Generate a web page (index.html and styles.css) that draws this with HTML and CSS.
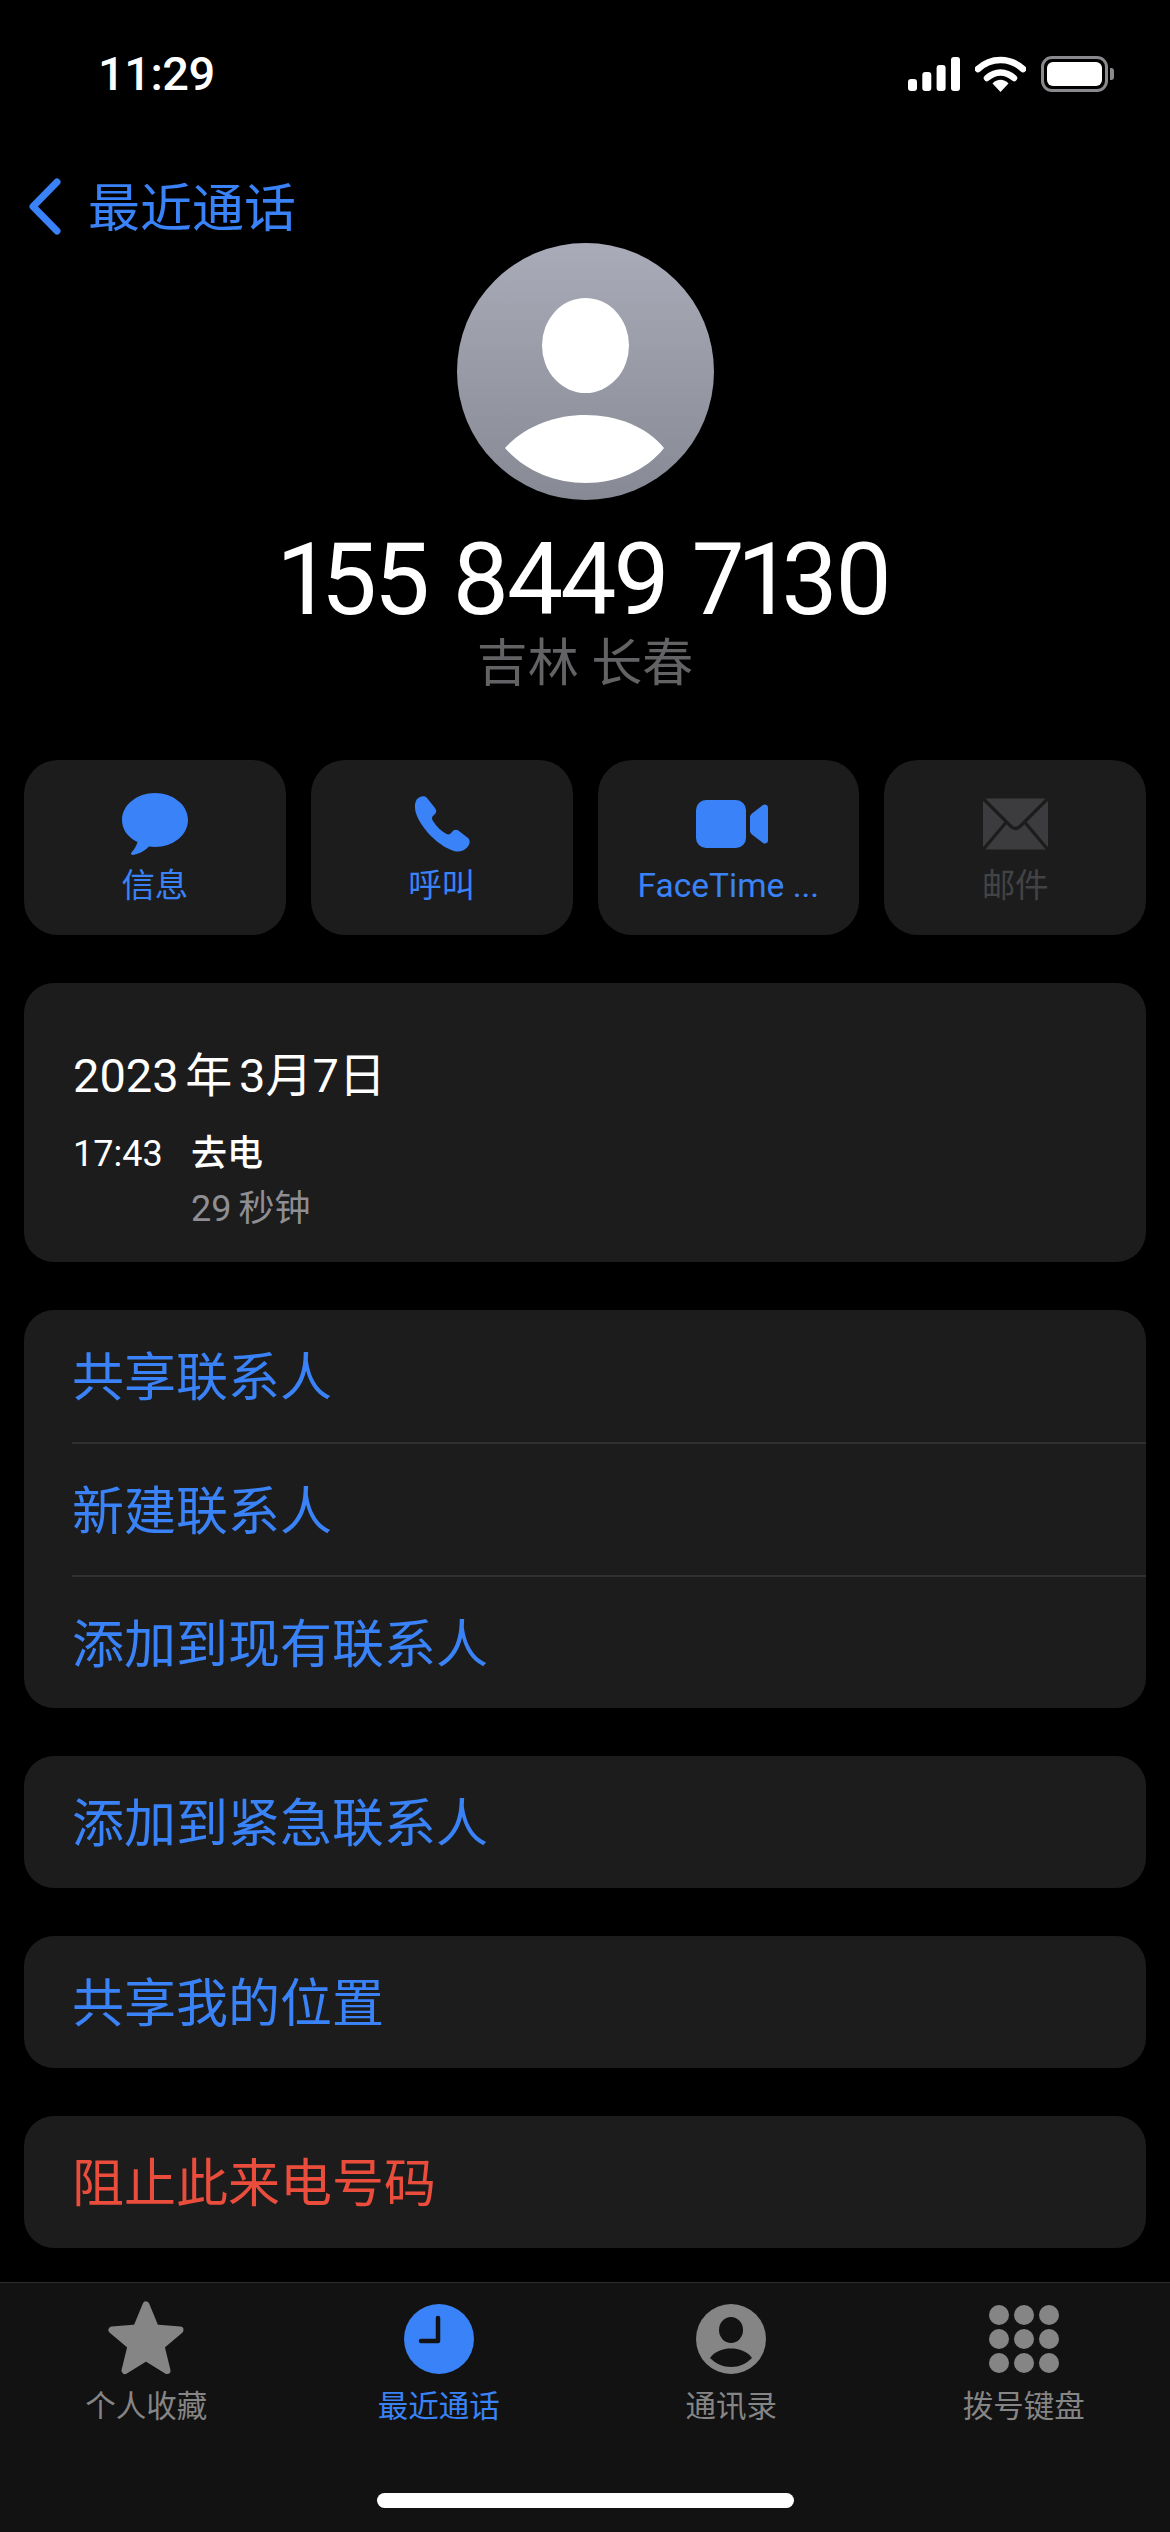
FILE: index.html
```html
<!DOCTYPE html>
<html lang="zh-CN">
<head>
  <meta charset="UTF-8" />
  <meta name="viewport" content="width=device-width, initial-scale=1.0"/>
  <title>最近通话</title>
  <link rel="stylesheet" href="styles.css">
</head>
<body>
  <div class="status">
    <span class="clock">11:29</span>
    <div class="status-icons">
      <svg class="ic-signal" width="52" height="34" viewBox="0 0 52 34"><rect x="0" y="22" width="9" height="12" rx="3"/><rect x="14.3" y="15" width="9" height="19" rx="3"/><rect x="28.6" y="8" width="9" height="26" rx="3"/><rect x="43" y="0" width="9" height="34" rx="3"/></svg>
      <svg class="ic-wifi" width="51" height="36" viewBox="0 0 51 36"><path d="M3 13 C16 1 35 1 48 13" fill="none" stroke="#fff" stroke-width="6.5" stroke-linecap="round"/><path d="M12 22 C20 14.500 31 14.500 39 22" fill="none" stroke="#fff" stroke-width="6.5" stroke-linecap="round"/><path d="M17.500 27.500 C22 22.500 29 22.500 33.500 27.500 L25.500 36 Z" fill="#fff"/></svg>
      <div class="battery"><div class="battery-fill"></div></div>
    </div>
  </div>

  <a class="back">
    <svg width="33" height="57" viewBox="0 0 33 57"><path d="M29 4 L5 28.500 L29 53" fill="none" stroke="#3a82f7" stroke-width="7" stroke-linecap="round" stroke-linejoin="round"/></svg>
    <span>最近通话</span>
  </a>

  <div class="avatar">
    <svg width="257" height="257" viewBox="0 0 257 257">
      <defs><linearGradient id="avatarBg" x1="0" y1="0" x2="0" y2="1"><stop offset="0" stop-color="#a9acb8"/><stop offset="1" stop-color="#878a94"/></linearGradient></defs>
      <circle cx="128.500" cy="128.500" r="128.500" fill="url(#avatarBg)"/>
      <ellipse cx="128.500" cy="102.500" rx="43.500" ry="47.500" fill="#fff"/>
      <path d="M48 205 C68 183 98 172 128.500 172 C159 172 189 183 207 205 C189 228 159 240 128.500 240 C98 240 68 228 48 205 Z" fill="#fff"/>
    </svg>
  </div>
  <div class="number">155 8449 7130</div>
  <div class="place">吉林 长春</div>

  <div class="content">
    <div class="actions">
      <div class="action">
        <svg width="66" height="62" viewBox="0 0 66 62"><path d="M33 0 C51 0 66 12 66 27 C66 42 51 54 33 54 C31 54 29 53.800 27 53.500 C23 57.500 17 61 11 62 C9 62 8.500 60.500 9.500 59.500 C12 57 14.500 53 15.500 49 C6 44.500 0 36.500 0 27 C0 12 15 0 33 0 Z" fill="#3a82f7"/></svg>
        <span>信息</span>
      </div>
      <div class="action">
        <svg width="56" height="56" viewBox="0 0 56 56"><path d="M3 3 C6 0 11 -1 13 2 L21 12 C23 15 22.500 17 20 19 C17.500 21 17.500 22.500 19 25 C23 31 27 35 32.500 38 C34.500 39 36 38.500 38 36 C40 33.500 42.500 33 45 35 L54 42 C56.500 44 56 48.500 53.500 51 C50 55 45 56.500 40 55 C26 50.500 10 36 3 20 C0.500 14 0 7.500 3 3 Z" fill="#3a82f7"/></svg>
        <span>呼叫</span>
      </div>
      <div class="action">
        <svg class="ic-video" width="72" height="48" viewBox="0 0 72 48"><rect x="0" y="0" width="50" height="48" rx="10" fill="#3a82f7"/><path d="M54 17 C54 15.500 55 14.500 56 13.500 L67 5 C69 3.500 72 5 72 7.500 L72 40.500 C72 43 69 44.500 67 43 L56 34.500 C55 33.500 54 32.500 54 31 Z" fill="#3a82f7"/></svg>
        <span>FaceTime ...</span>
      </div>
      <div class="action off">
        <svg width="65" height="51" viewBox="0 0 65 51"><rect width="65" height="51" rx="4" fill="#3c3c3e"/><path d="M1 1 L28 28 Q32.500 32 37 28 L64 1 M1 50 L23 24 M64 50 L42 24" fill="none" stroke="#1c1c1d" stroke-width="3.200"/></svg>
        <span>邮件</span>
      </div>
    </div>

    <div class="card log">
      <div class="log-date">2023 年 3月7日</div>
      <div class="log-row">
        <div class="log-time">17:43</div>
        <div>
          <div class="log-type">去电</div>
          <div class="log-len">29 秒钟</div>
        </div>
      </div>
    </div>

    <div class="card">
      <div class="row">共享联系人</div>
      <div class="row">新建联系人</div>
      <div class="row">添加到现有联系人</div>
    </div>
    <div class="card"><div class="row">添加到紧急联系人</div></div>
    <div class="card"><div class="row">共享我的位置</div></div>
    <div class="card"><div class="row red">阻止此来电号码</div></div>
  </div>

  <div class="tabbar">
    <div class="tabs">
      <div class="tab">
        <svg width="76" height="72" viewBox="0 3 76 72"><path d="M38 4 L47.500 27 L72 29 L53 45 L59 69.500 L38 56.500 L17 69.500 L23 45 L4 29 L28.500 27 Z" fill="#858585" stroke="#858585" stroke-width="7" stroke-linejoin="round"/></svg>
        <span>个人收藏</span>
      </div>
      <div class="tab active">
        <svg width="70" height="72" viewBox="0 0 70 72"><circle cx="35" cy="35" r="35" fill="#3a82f7"/><path d="M34 14 L34 37 L17 37" fill="none" stroke="#121212" stroke-width="4.500" stroke-linecap="round" stroke-linejoin="round"/></svg>
        <span>最近通话</span>
      </div>
      <div class="tab">
        <svg width="70" height="72" viewBox="0 0 70 72"><circle cx="35" cy="35" r="35" fill="#858585"/><ellipse cx="35" cy="26" rx="12" ry="13" fill="#121212"/><path d="M14 54 C19 47 27 44.500 35 44.500 C43 44.500 51 47 56 54 C50 60 43 63 35 63 C27 63 20 60 14 54 Z" fill="#121212"/></svg>
        <span>通讯录</span>
      </div>
      <div class="tab">
        <svg width="70" height="72" viewBox="0 0 70 72" fill="#858585"><circle cx="10" cy="11" r="10"/><circle cx="35" cy="11" r="10"/><circle cx="60" cy="11" r="10"/><circle cx="10" cy="35" r="10"/><circle cx="35" cy="35" r="10"/><circle cx="60" cy="35" r="10"/><circle cx="10" cy="59" r="10"/><circle cx="35" cy="59" r="10"/><circle cx="60" cy="59" r="10"/></svg>
        <span>拨号键盘</span>
      </div>
    </div>
    <div class="home"></div>
  </div>
</body>
</html>
```

FILE: styles.css
```css
* { box-sizing: border-box; }
body { margin: 0; width: 1170px; height: 2532px; overflow: hidden; background: #000; color: #fff; font-family: Roboto, "Noto Sans CJK SC", sans-serif; display: flex; flex-direction: column; }

.status { height: 148px; padding: 50px 62px 0 98px; display: flex; justify-content: space-between; align-items: flex-start; }
.clock { font-size: 47px; line-height: 48px; font-weight: 500; letter-spacing: -0.5px; }
.status-icons { display: flex; align-items: center; gap: 15px; margin-top: 6px; }
.ic-signal { fill: #fff; }
.battery { width: 67px; height: 36px; border: 3px solid #8a8a8e; border-radius: 11px; padding: 3px; position: relative; }
.battery::after { content: ""; position: absolute; right: -9px; top: 9px; width: 4px; height: 12px; background: #8a8a8e; border-radius: 0 3px 3px 0; }
.battery-fill { width: 100%; height: 100%; background: #fff; border-radius: 6px; }

.back { height: 95px; padding: 30px 0 0 28px; display: flex; align-items: flex-start; gap: 27px; color: #3a82f7; font-size: 52px; line-height: 63px; }
.avatar { height: 257px; display: flex; justify-content: center; }
.number { margin-top: 27px; height: 100px; line-height: 106px; font-size: 100px; text-align: center; font-variant-numeric: proportional-nums; letter-spacing: -3px; word-spacing: 3px; }
.place { margin-top: 7px; height: 60px; line-height: 60px; font-size: 51px; text-align: center; color: #636366; }

.content { padding: 0 24px; }
.actions { margin-top: 66px; display: grid; grid-template-columns: repeat(4, 1fr); gap: 25px; }
.action { height: 175px; background: #1c1c1d; border-radius: 34px; color: #3a82f7; display: flex; flex-direction: column; align-items: center; }
.action svg { height: 62px; margin-top: 33px; }
.action .ic-video { margin-left: 7px; }
.action span { margin-top: 11px; font-size: 33.500px; line-height: 40px; }
.action.off { color: #434345; }

.card { margin-top: 48px; background: #1c1c1d; border-radius: 30px; overflow: hidden; }
.log { height: 279px; padding: 65px 49px 0; }
.log-date { font-size: 47px; line-height: 56px; word-spacing: -5px; }
.log-row { margin-top: 24px; display: flex; font-size: 36px; line-height: 52px; }
.log-time { width: 118px; }
.log-type { font-weight: 500; height: 55px; }
.log-len { color: #8e8e93; word-spacing: -2px; }

.row { height: 133px; line-height: 138px; margin-left: 48px; font-size: 52px; color: #3a82f7; border-top: 2px solid #303032; }
.row:first-child { height: 132px; border-top: none; }
.row.red { color: #eb4d3d; }

.tabbar { margin-top: auto; height: 250px; background: #121212; border-top: 1px solid #2c2c2e; display: flex; flex-direction: column; }
.tabs { display: grid; grid-template-columns: repeat(4, 1fr); height: 210px; }
.tab { display: flex; flex-direction: column; align-items: center; color: #858585; }
.tab svg { margin-top: 21px; height: 72px; overflow: visible; }
.tab span { margin-top: 13px; font-size: 30.500px; line-height: 36px; }
.tab.active { color: #3a82f7; }
.home { width: 417px; height: 15px; margin: 0 auto; background: #fff; border-radius: 8px; }
```
